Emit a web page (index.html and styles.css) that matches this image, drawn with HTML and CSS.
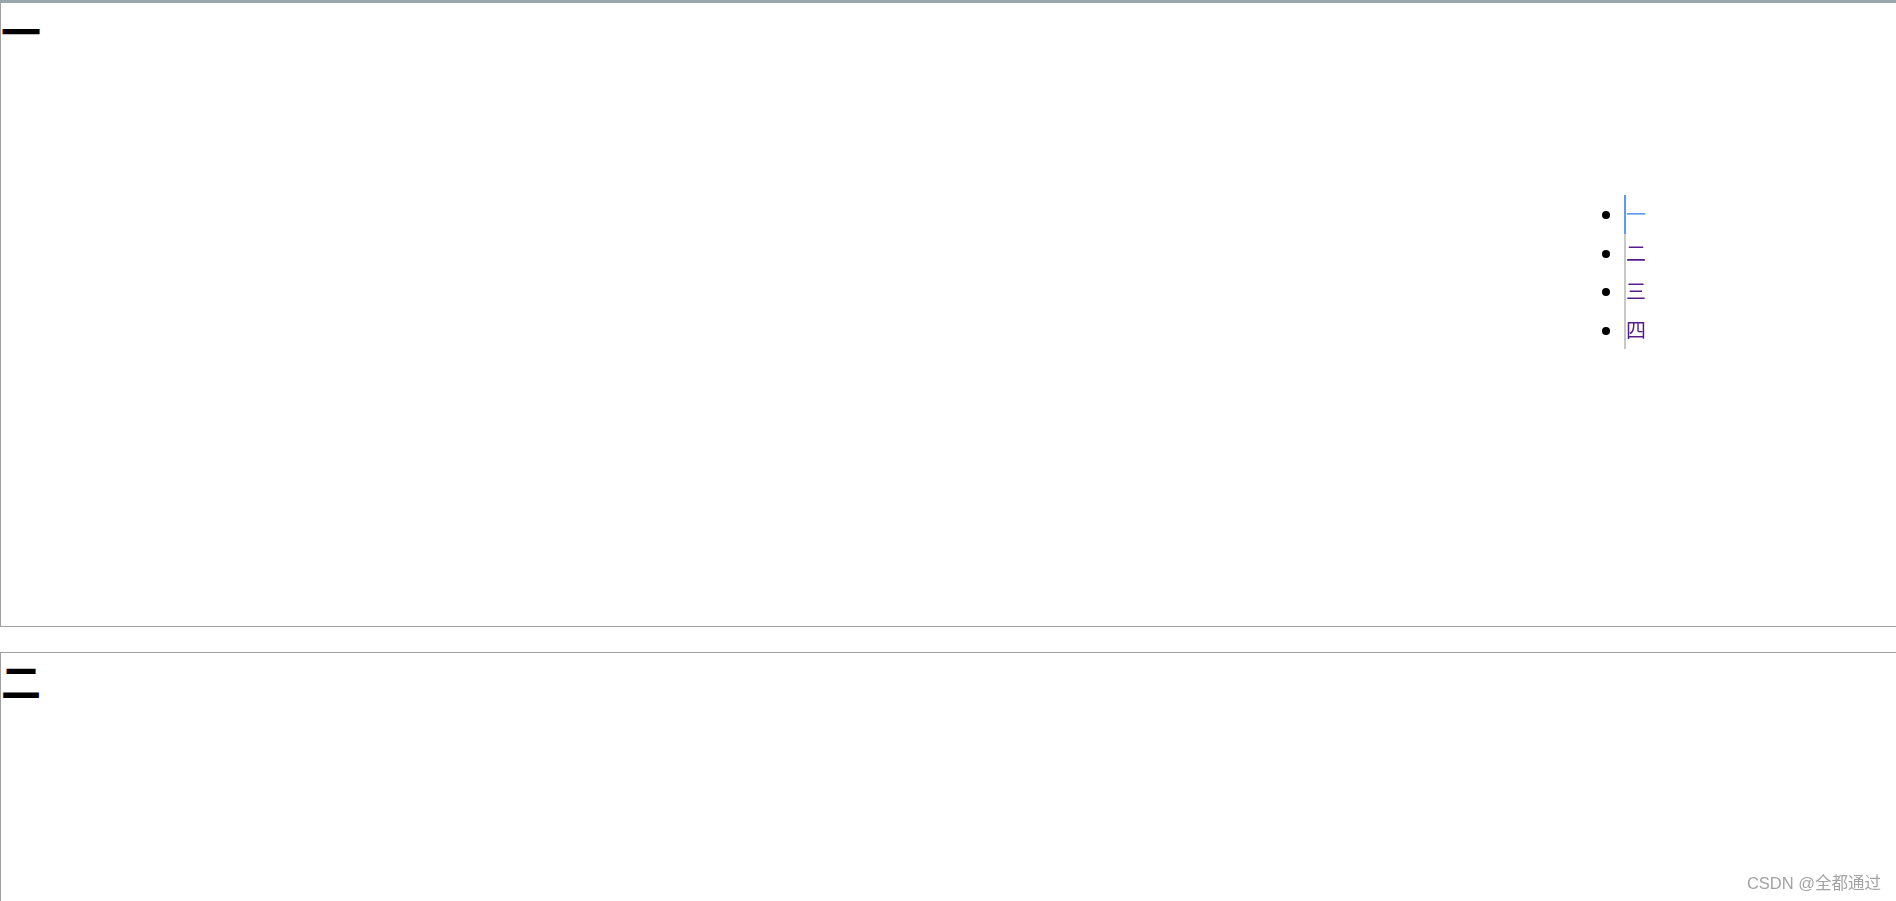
FILE: index.html
```html
<!DOCTYPE html>
<html lang="zh">
<head>
    <meta charset="UTF-8">
    <meta name="viewport" content="width=device-width, initial-scale=1.0">
    <title>滚动监听</title>
    <link rel="stylesheet" href="styles.css">
</head>
<body>
<div class="topbar"></div>
<div class="section first" id="one">
    <h1>一</h1>
</div>
<div class="section" id="two">
    <h1>二</h1>
</div>

<ul class="nav">
    <li><a class="active" href="#one">一</a></li>
    <li><a class="visited" href="#two">二</a></li>
    <li><a class="visited" href="#three">三</a></li>
    <li><a class="visited" href="#four">四</a></li>
</ul>

<div class="mark">CSDN @全都通过</div>
</body>
</html>
```

FILE: styles.css
```css
html, body {
    margin: 0;
    overflow: hidden; /* 只显示一屏 */
}

body {
    font-family: "Noto Sans CJK SC", sans-serif;
}

.topbar {
    height: 3px;
    background-color: #98a7aa;
}

.section {
    height: 623px;
    border: 1px solid #a0a0a0;
    border-right: none;
    margin-bottom: 25px;
}

.section.first {
    border-top: none;
}

.section h1 {
    margin: 0;
    font-size: 40px;
    font-weight: bold;
    line-height: 54px;
}

/* 右侧导航 */
.nav {
    position: fixed;
    top: 195px;
    left: 1624px;
    margin: 0;
    padding: 0;
    font-size: 20px;
}

.nav a {
    display: block;
    line-height: 38.5px;
    border-left: 2px solid #c8c8c8;
    text-decoration: none;
}

.nav a.active {
    color: #5b9bf5;
    border-left-color: #5b9bf5;
}

.nav a.visited {
    color: #551a8b;
}

.mark {
    position: fixed;
    right: 15px;
    bottom: 7px;
    font-family: "Liberation Sans", "Noto Sans CJK SC", sans-serif;
    font-size: 16.5px;
    color: #a3a3a3;
}
```
